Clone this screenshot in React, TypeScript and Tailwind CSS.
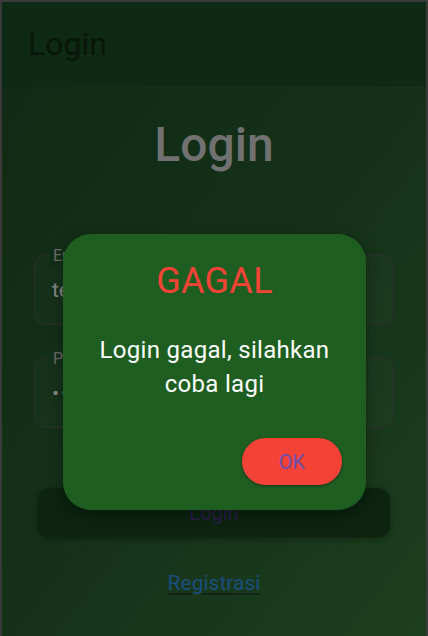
import React from "react";

export default function App() {
  return (
    <div
      className="relative w-[428px] h-[636px] overflow-hidden border-l-2 border-t-2 border-r-2 border-[#3a3a3a] flex flex-col"
      style={{ fontFamily: "Roboto, 'Noto Sans', sans-serif" }}
    >
      {/* App bar */}
      <div className="h-[84px] shrink-0 bg-[#0f2a14] flex items-center pl-[26px]">
        <span className="text-[32px] leading-[40px] text-[#0a150b]">Login</span>
      </div>

      {/* Body */}
      <div className="flex-1 bg-gradient-to-br from-[#112a15] via-[#153219] to-[#1c3f1d] flex flex-col px-[32px] pt-[31px]">
        <h1 className="text-center text-[48px] leading-[56px] font-medium text-[#717171]">Login</h1>

        {/* Email */}
        <div className="relative mt-[81px] h-[71px] rounded-[12px] border-[1.5px] border-[#2e2e2e] bg-white/[0.015] flex items-center pl-[17px]">
          <span className="absolute -top-[9px] left-[14px] px-1 bg-[#132e17] text-[16px] leading-[20px] text-[#6a6a6a]">Email</span>
          <span className="text-[21px] leading-[28px] text-[#868686]">test@gmail.com</span>
        </div>

        {/* Password */}
        <div className="relative mt-[32px] h-[71px] rounded-[12px] border-[1.5px] border-[#2e2e2e] bg-white/[0.015] flex items-center pl-[17px]">
          <span className="absolute -top-[9px] left-[14px] px-1 bg-[#14301a] text-[16px] leading-[20px] text-[#6a6a6a]">Password</span>
          <span className="text-[21px] leading-[28px] text-[#868686] tracking-[2px]">••••••••</span>
        </div>

        {/* Login button */}
        <div className="mx-[4px] mt-[60px] h-[49px] rounded-[12px] bg-[#0c2410] shadow-[0_2px_6px_rgba(0,0,0,0.35)] flex items-center justify-center">
          <span className="text-[20px] leading-[28px] text-[#2b1d4a]">Login</span>
        </div>

        {/* Registrasi */}
        <div className="mt-[32px] flex justify-center">
          <span className="text-[21px] leading-[28px] text-[#1c4f7f] underline decoration-[#142414] decoration-2 underline-offset-[3px]">
            Registrasi
          </span>
        </div>
      </div>

      {/* Dialog */}
      <div className="absolute left-[61px] top-[232px] w-[303px] h-[276px] rounded-[28px] bg-[#1e5e21] shadow-[0_4px_14px_rgba(0,0,0,0.35)] flex flex-col pt-[26px] px-[20px]">
        <div className="text-center text-[36px] leading-[42px] text-[#f44336] tracking-[0.3px]">GAGAL</div>
        <div className="mt-[31px] text-center text-[24px] leading-[34px] tracking-[0.3px] text-white">
          Login gagal, silahkan
          <br />
          coba lagi
        </div>
        <div className="mt-[37px] flex justify-end pr-[4px]">
          <div className="w-[100px] h-[47px] rounded-full bg-[#f44336] shadow-[0_1px_3px_rgba(0,0,0,0.4)] flex items-center justify-center">
            <span className="text-[20px] leading-[24px] text-[#6a4fae]">OK</span>
          </div>
        </div>
      </div>
    </div>
  );
}
